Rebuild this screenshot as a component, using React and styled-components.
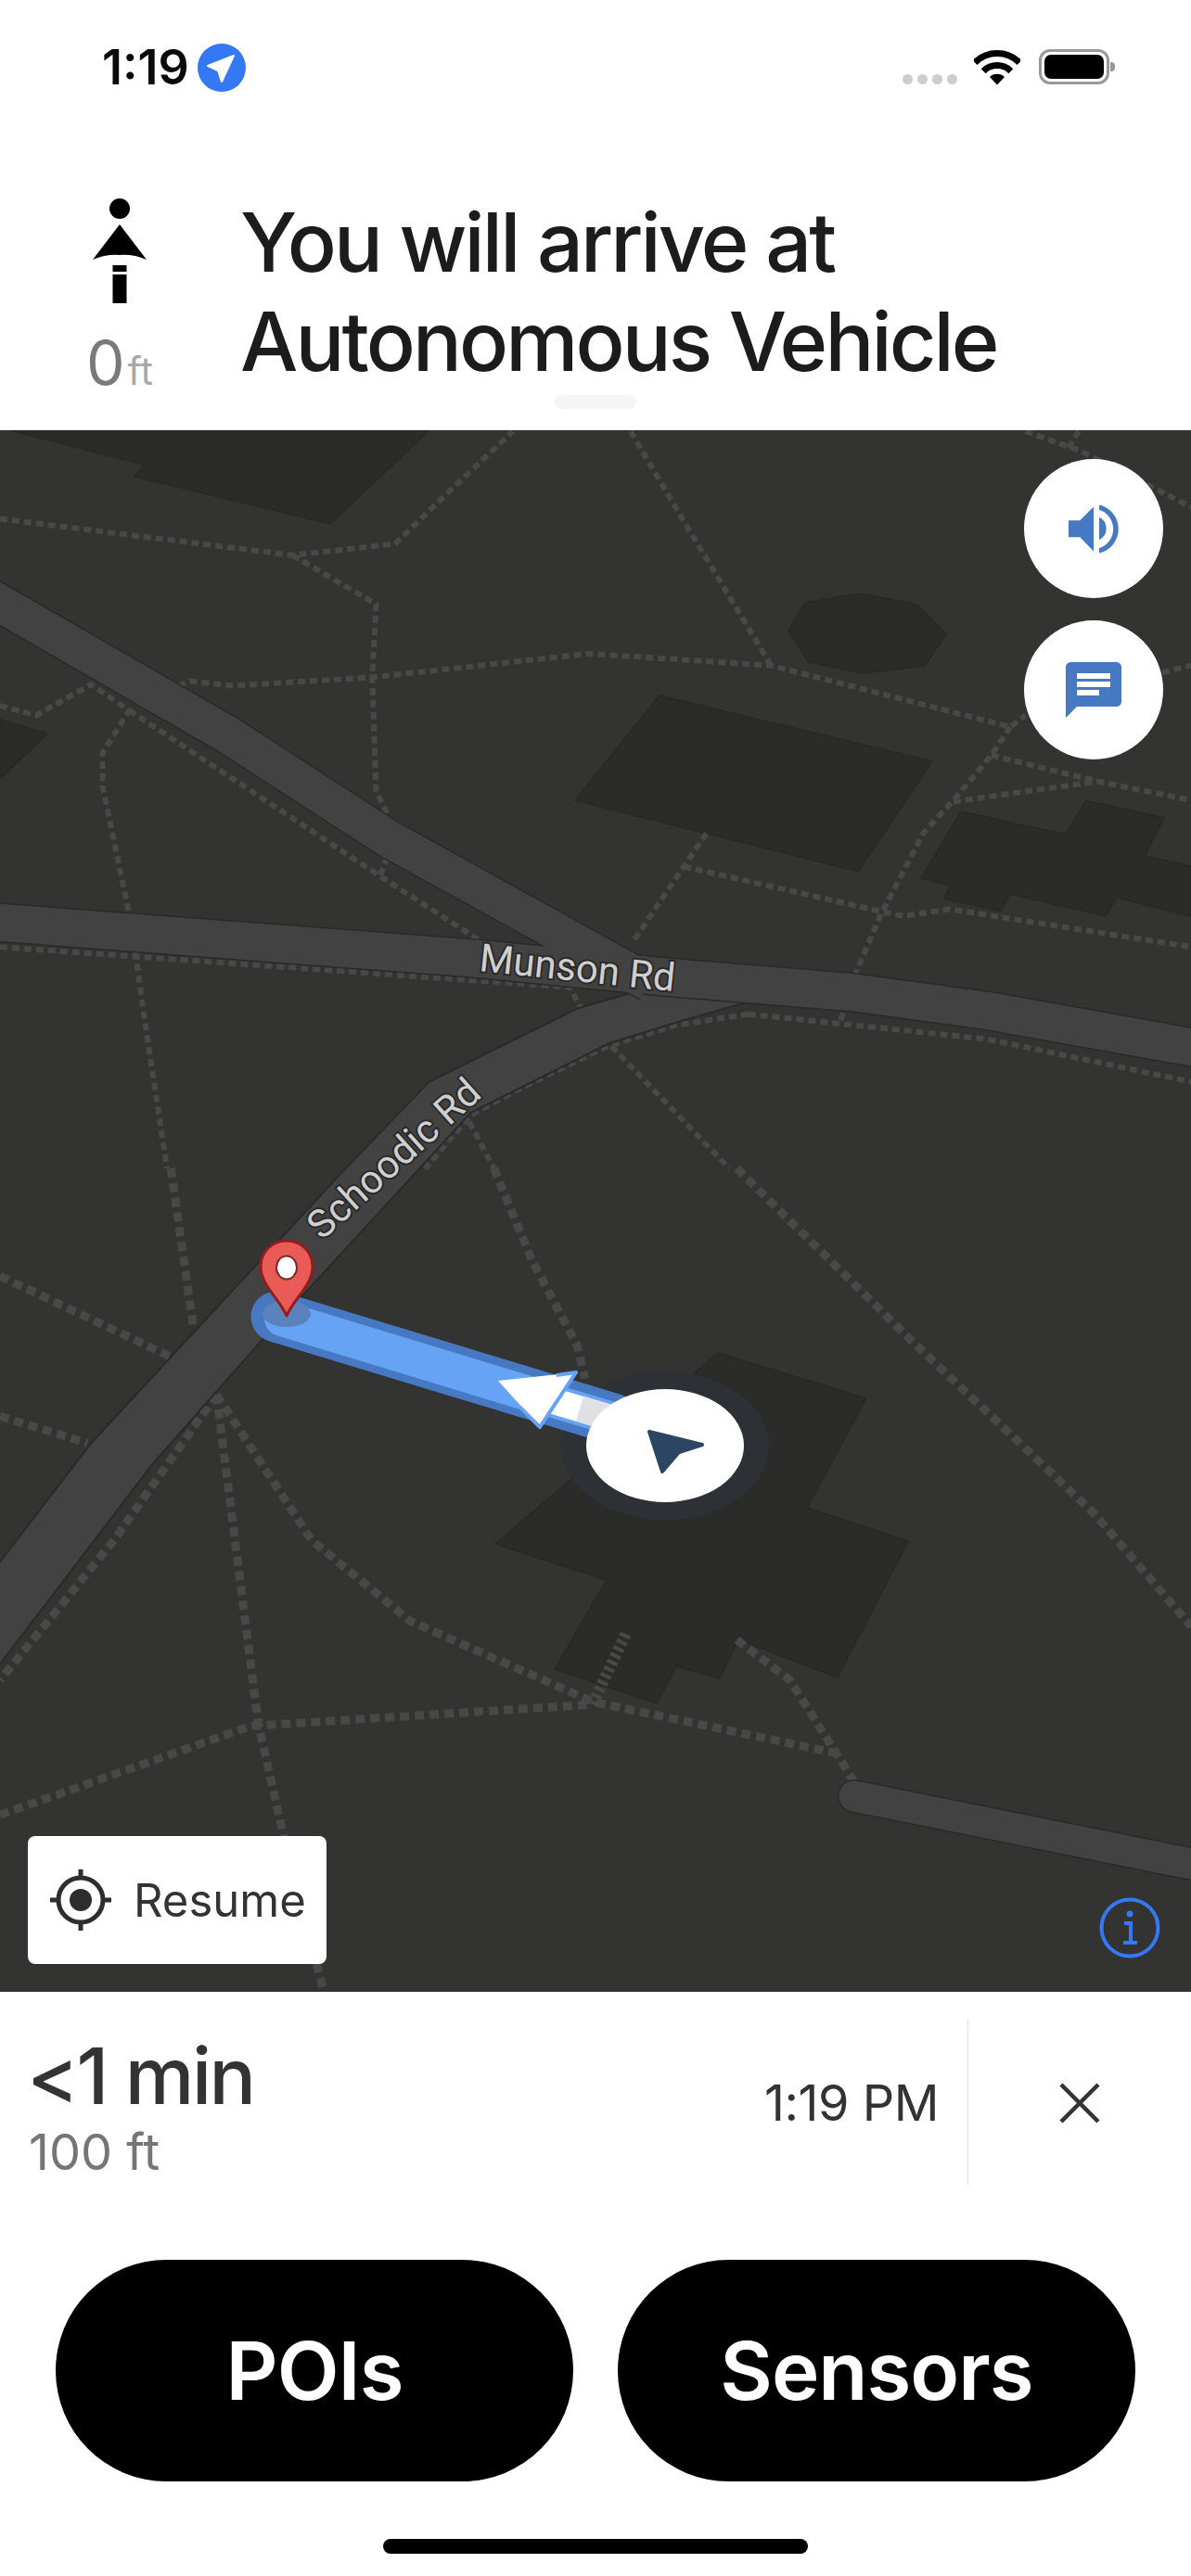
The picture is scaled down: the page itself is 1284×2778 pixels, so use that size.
import React from "react";
import styled, { createGlobalStyle } from "styled-components";

const Global = createGlobalStyle`
  html, body { margin: 0; padding: 0; background: #fff; }
  body { font-family: Inter, "Liberation Sans", sans-serif; }
`;

const Page = styled.div`
  width: 1284px;
  height: 2778px;
  display: flex;
  flex-direction: column;
  background: #fff;
  overflow: hidden;
`;

const StatusBar = styled.div`
  height: 130px;
  box-sizing: border-box;
  padding: 44px 88px 0 110px;
  display: flex;
  align-items: flex-start;
  justify-content: space-between;
`;
const StatusLeft = styled.div`
  display: flex;
  align-items: center;
  gap: 9px;
`;
const Clock = styled.div`
  font-size: 52px;
  line-height: 58px;
  font-weight: 600;
  color: #0a0a0a;
`;
const StatusRight = styled.div`
  display: flex;
  align-items: flex-end;
  height: 38px;
  margin-top: 9px;
`;
const SignalDots = styled.div`
  display: flex;
  gap: 5px;
  margin-right: 18px;
`;
const SignalDot = styled.span`
  width: 11px;
  height: 11px;
  border-radius: 50%;
  background: #cdcdcd;
`;
const Battery = styled.div`
  width: 76px;
  height: 38px;
  box-sizing: border-box;
  margin-left: 20px;
  border: 3.5px solid #999;
  border-radius: 12px;
  padding: 3px;
  position: relative;
  &::after {
    content: "";
    position: absolute;
    right: -9px;
    top: 11px;
    width: 5px;
    height: 10px;
    background: #999;
    border-radius: 0 4px 4px 0;
  }
`;
const BatteryFill = styled.div`
  height: 100%;
  background: #000;
  border-radius: 7px;
`;

const Header = styled.div`
  height: 334px;
  box-sizing: border-box;
  padding: 84px 0 0 0;
  display: flex;
  position: relative;
  border-bottom: 1px solid #dfe5ea;
`;
const TurnCol = styled.div`
  width: 259px;
  box-sizing: border-box;
  padding-left: 93px;
  display: flex;
  flex-direction: column;
`;
const TurnIcon = styled.svg`
  width: 70px;
  height: 118px;
  display: block;
  margin-left: 1px;
`;
const Distance = styled.div`
  margin-top: 29px;
  display: flex;
  align-items: baseline;
  color: #7a7a7a;
  font-size: 66px;
  line-height: 60px;
`;
const Unit = styled.span`
  color: #a8a8a8;
  font-size: 41px;
  margin-left: 3px;
`;
const Title = styled.div`
  margin-top: -6px;
  font-size: 88px;
  line-height: 107px;
  font-weight: 500;
  color: #1c1c1c;
  letter-spacing: -2.9px;
`;
const Handle = styled.div`
  position: absolute;
  left: 598px;
  top: 296px;
  width: 88px;
  height: 15px;
  border-radius: 8px;
  background: #f5f5f5;
`;

const MapArea = styled.div`
  position: relative;
  height: 1684px;
  background: #333332;
  overflow: hidden;
`;
const MapSvg = styled.svg`
  display: block;
  width: 1284px;
  height: 1684px;
`;
const Round = styled.div`
  position: absolute;
  left: 1104px;
  top: ${(p) => p.$top}px;
  width: 150px;
  height: 150px;
  border-radius: 50%;
  background: #fff;
  display: flex;
  align-items: center;
  justify-content: center;
`;
const ResumeButton = styled.div`
  position: absolute;
  left: 30px;
  top: 1516px;
  width: 322px;
  height: 138px;
  box-sizing: border-box;
  padding-left: 23px;
  border-radius: 8px;
  background: #fff;
  display: flex;
  align-items: center;
  gap: 23px;
  color: #333;
  font-size: 49px;
`;
const InfoIcon = styled.svg`
  position: absolute;
  left: 1184px;
  top: 1581px;
  width: 68px;
  height: 68px;
`;

const Summary = styled.div`
  height: 289px;
  box-sizing: border-box;
  padding: 46px 0 0 29px;
  display: flex;
  align-items: flex-start;
`;
const Trip = styled.div`
  flex: 1;
`;
const Eta = styled.div`
  font-size: 84px;
  line-height: 90px;
  font-weight: 500;
  color: #333;
  letter-spacing: -2.5px;
`;
const Miles = styled.div`
  font-size: 54px;
  line-height: 66px;
  margin-top: 4px;
  margin-left: 2px;
  color: #757575;
`;
const Arrival = styled.div`
  margin-top: 44px;
  margin-right: 31px;
  font-size: 54px;
  line-height: 60px;
  letter-spacing: -0.5px;
  color: #333;
`;
const Close = styled.div`
  width: 240px;
  height: 179px;
  margin-top: -16px;
  border-left: 1px solid #dde3ea;
  display: flex;
  align-items: center;
  justify-content: center;
`;

const Actions = styled.div`
  padding: 0 60px;
  display: flex;
  gap: 48px;
`;
const Action = styled.div`
  flex: 1;
  height: 239px;
  border-radius: 120px;
  background: #000;
  color: #fff;
  font-size: 87px;
  font-weight: 600;
  letter-spacing: -1px;
  display: flex;
  align-items: center;
  justify-content: center;
`;
const HomeBar = styled.div`
  width: 458px;
  height: 16px;
  border-radius: 8px;
  background: #000;
  margin: 62px auto 0;
`;

/* zoomed-crop coordinates of the map features, converted to page coordinates */
const a = (x, y) => [x / 1.221, y / 1.96 + 460];
const b = (x, y) => [x / 1.221, y / 1.721 + 1260];
const pts = (conv, l) => l.map(([x, y]) => conv(x, y).join(",")).join(" ");

const upperPaths = [
  [[0,195],[385,272],[520,248],[570,170],[675,10]],
  [[385,272],[495,375],[490,530],[495,770],[510,820]],
  [[830,10],[900,200],[1015,505]],
  [[235,548],[250,538],[305,548],[490,530],[775,480],[1015,505],[1330,635],[1350,610]],
  [[1330,635],[1305,695],[1255,790],[1215,860],[1160,1030],[1125,1160]],
  [[1305,695],[1445,750],[1568,790]],
  [[1255,793],[1445,750]],
  [[1350,10],[1420,50],[1568,170]],
  [[1420,10],[1405,50]],
  [[1530,520],[1568,505]],
  [[930,860],[900,930],[835,1085]],
  [[900,930],[1160,1025],[1190,1035],[1250,1020],[1568,1100]],
  [[0,590],[48,610],[120,545],[170,600],[135,690],[135,760],[170,1030]],
  [[170,600],[500,950],[630,1085]],
  [[510,910],[500,950]],
  [[0,1100],[175,1120],[750,1185],[765,1230]],
  [[178,1110],[190,1250],[220,1568]],
  [[985,1242],[890,1265],[800,1310],[690,1395],[620,1455],[560,1568]],
  [[985,1242],[1300,1295],[1568,1385]],
  [[1110,1240],[1105,1260]],
  [[805,1310],[960,1568]],
  [[618,1470],[650,1568]],
];
const lowerPaths = [
  [[225,0],[255,300]],
  [[650,0],[700,170],[760,330],[770,390]],
  [[970,0],[1200,320],[1440,640],[1568,850]],
  [[0,200],[225,350]],
  [[0,460],[115,510]],
  [[285,420],[150,690],[0,950]],
  [[285,420],[340,1030],[375,1250],[430,1549]],
  [[285,420],[410,690],[540,840],[780,990],[1100,1085]],
  [[0,1200],[330,1035],[780,995]],
  [[970,875],[1040,950],[1125,1140]],
];
const buildings = [
  "10,464 155,501 145,514 356,565 463,464",
  "0,776 51,791 0,840",
  "868,650 927,640 989,652 1020,684 997,718 931,726 872,714 850,680",
  "711,750 1005,821 925,940 620,863",
  "1036,875 1149,900 1171,863 1255,882 1234,923 1284,934 1284,988 1204,968 1192,988 1089,964 1079,983 1018,969 1024,955 993,947",
  "774,1459 934,1508 870,1626 979,1662 903,1809 796,1768 776,1810 729,1797 708,1837 598,1800 654,1704 534,1665",
];
const roads = [
  { p: "-10,645 245,792 418,904 700,1060", w: 40 },
  { p: "-10,994 516,1034 721,1054 917,1070 1065,1090 1294,1131", w: 40 },
];
const schoodic = [
  ...[[900,1165],[835,1195],[760,1230],[565,1385],[455,1568]].map(([x, y]) => a(x, y)),
  ...[[120,510],[0,730],[-10,750],[-10,925],[0,920],[200,550],[350,310]].map(([x, y]) => b(x, y)),
  ...[[620,1450],[800,1305],[900,1255],[980,1218],[1000,1165]].map(([x, y]) => a(x, y)),
]
  .map((q) => q.join(","))
  .join(" ");

const MapDrawing = () => (
  <MapSvg viewBox="0 464 1284 1684">
    {buildings.map((p) => (
      <polygon key={p} points={p} fill="#2b2b2a" stroke="#282828" strokeWidth="1.5" />
    ))}
    <g fill="none" stroke="#484848">
      {upperPaths.map((l, i) => (
        <polyline key={i} points={pts(a, l)} strokeWidth="6" strokeDasharray="8 5" />
      ))}
      {lowerPaths.map((l, i) => (
        <polyline key={i} points={pts(b, l)} strokeWidth="9" strokeDasharray="10 6" />
      ))}
      <polyline points={pts(b, [[780,995],[825,860]])} strokeWidth="12" strokeDasharray="4 4" />
    </g>
    <polygon points={schoodic} fill="#424242" stroke="#2a2a2a" strokeWidth="2" strokeLinejoin="round" />
    <g fill="none" strokeLinejoin="round">
      {roads.map((r) => (
        <polyline key={r.p} points={r.p} stroke="#2a2a2a" strokeWidth={r.w + 3} />
      ))}
      {roads.map((r) => (
        <polyline key={r.p + "f"} points={r.p} stroke="#424242" strokeWidth={r.w} />
      ))}
      <polyline points="921,1937 1294,2012" stroke="#2a2a2a" strokeWidth="36" strokeLinecap="round" />
      <polyline points="921,1937 1294,2012" stroke="#424242" strokeWidth="33" strokeLinecap="round" />
    </g>

    <g fontFamily="Roboto, sans-serif" fill="#cfcfcf" stroke="#2a2a2a" strokeWidth="4" style={{ paintOrder: "stroke" }}>
      <text x="0" y="0" fontSize="42" textAnchor="middle" transform="translate(621 1058) rotate(6)">Munson Rd</text>
      <text x="0" y="0" fontSize="42" textAnchor="middle" transform="translate(434 1260) rotate(-42)">Schoodic Rd</text>
    </g>

    <ellipse cx="717" cy="1559" rx="112" ry="80" fill="#2d3035" />
    <polyline points="298,1420 661,1530" fill="none" stroke="#4679c2" strokeWidth="55" strokeLinecap="round" />
    <polyline points="304,1422 590,1509" fill="none" stroke="#66a3f4" strokeWidth="38" strokeLinecap="round" />
    <polyline points="590,1509 661,1530" fill="none" stroke="#66a3f4" strokeWidth="36" />
    <polyline points="590,1509 661,1530" fill="none" stroke="#ffffff" strokeWidth="28" />
    <polyline points="625,1519 661,1530" fill="none" stroke="#dfe1e5" strokeWidth="28" />

    <ellipse cx="309" cy="1417" rx="26" ry="14" fill="#5c82bc" />
    <path d="M309 1419 C301 1400 281 1386 281 1366 C281 1350 293 1338 309 1338 C325 1338 337 1350 337 1366 C337 1386 317 1400 309 1419 Z" fill="#ea5b57" stroke="#8f1f1c" strokeWidth="3" strokeLinejoin="round" />
    <ellipse cx="309" cy="1367" rx="11" ry="12.5" fill="#fff" stroke="#7a2a28" strokeWidth="2" />

    <polygon points="537,1489 621,1480 582,1539" fill="#fff" />
    <polyline points="560,1517 582,1539 621,1480 600,1483" fill="none" stroke="#66a3f4" strokeWidth="4" strokeLinejoin="round" />

    <ellipse cx="717" cy="1559" rx="85" ry="61" fill="#fff" />
    <polygon points="700,1544 757,1558 732,1566 714,1587" fill="#2c4560" stroke="#2c4560" strokeWidth="4" strokeLinejoin="round" />
  </MapSvg>
);

export default function App() {
  return (
    <Page>
      <Global />
      <StatusBar>
        <StatusLeft>
          <Clock>1:19</Clock>
          <svg width="52" height="52" viewBox="-26 -26 52 52">
            <circle r="26" fill="#3478f6" />
            <polygon points="-15,-2 13,-13 0,15 -4,3" fill="#fff" stroke="#fff" strokeWidth="2" strokeLinejoin="round" />
          </svg>
        </StatusLeft>
        <StatusRight>
          <SignalDots>
            <SignalDot /><SignalDot /><SignalDot /><SignalDot />
          </SignalDots>
          <svg width="50" height="37" viewBox="0 0 50 37">
            <g fill="none" stroke="#000" strokeWidth="7">
              <path d="M1 13.5 A34 34 0 0 1 49 13.5" />
              <path d="M10.2 22.7 A21 21 0 0 1 39.8 22.7" />
            </g>
            <path d="M25 37.5 L17 29 A11.5 11.5 0 0 1 33 29 Z" fill="#000" />
          </svg>
          <Battery><BatteryFill /></Battery>
        </StatusRight>
      </StatusBar>

      <Header>
        <TurnCol>
          <TurnIcon viewBox="0 0 70 118">
            <ellipse cx="35" cy="11" rx="11" ry="11" fill="#000" />
            <path d="M35 28 L64 66 Q50 60 35 61 Q20 60 6 66 Z" fill="#000" />
            <rect x="27.5" y="72" width="15" height="7" fill="#000" />
            <rect x="27.5" y="82" width="15" height="31" fill="#000" />
          </TurnIcon>
          <Distance>0<Unit>ft</Unit></Distance>
        </TurnCol>
        <Title>You will arrive at<br />Autonomous Vehicle</Title>
        <Handle />
      </Header>

      <MapArea>
        <MapDrawing />
        <Round $top={31}>
          <svg width="58" height="55" viewBox="270 218 174 164">
            <path d="M276 272H313L357 228V372L313 326H276Z" fill="#4679c2" />
            <path d="M375 222A80 80 0 0 1 375 378V362A65 65 0 0 0 375 238Z" fill="#4679c2" />
            <path d="M375 262A40.5 40.5 0 0 1 375 335Z" fill="#4679c2" />
          </svg>
        </Round>
        <Round $top={205}>
          <svg width="60" height="60" viewBox="267 732 180 180">
            <path d="M283 732H431A16 16 0 0 1 447 748V860A16 16 0 0 1 431 876H303L267 912V748A16 16 0 0 1 283 732Z" fill="#4679c2" />
            <rect x="303" y="768" width="108" height="18" fill="#fff" />
            <rect x="303" y="795" width="108" height="18" fill="#fff" />
            <rect x="303" y="822" width="72" height="18" fill="#fff" />
          </svg>
        </Round>
        <ResumeButton>
          <svg width="68" height="68" viewBox="-34 -34 68 68">
            <circle r="24" fill="none" stroke="#2e2e2e" strokeWidth="5" />
            <circle r="12" fill="#2e2e2e" />
            <path d="M0 -33V-23M0 23V33M-33 0H-23M23 0H33" stroke="#2e2e2e" strokeWidth="5" />
          </svg>
          Resume
        </ResumeButton>
        <InfoIcon viewBox="-34 -34 68 68">
          <circle r="30.5" fill="none" stroke="#3478f6" strokeWidth="4" />
          <circle cx="0" cy="-15" r="3.5" fill="#3478f6" />
          <path d="M-6 -5H1V15M-7 16H8" fill="none" stroke="#3478f6" strokeWidth="4" />
        </InfoIcon>
      </MapArea>

      <Summary>
        <Trip>
          <Eta>&lt;1 min</Eta>
          <Miles>100 ft</Miles>
        </Trip>
        <Arrival>1:19 PM</Arrival>
        <Close>
          <svg width="44" height="44" viewBox="0 0 44 44">
            <path d="M2 2L42 42M42 2L2 42" stroke="#333" strokeWidth="4.5" />
          </svg>
        </Close>
      </Summary>

      <Actions>
        <Action>POIs</Action>
        <Action>Sensors</Action>
      </Actions>
      <HomeBar />
    </Page>
  );
}
